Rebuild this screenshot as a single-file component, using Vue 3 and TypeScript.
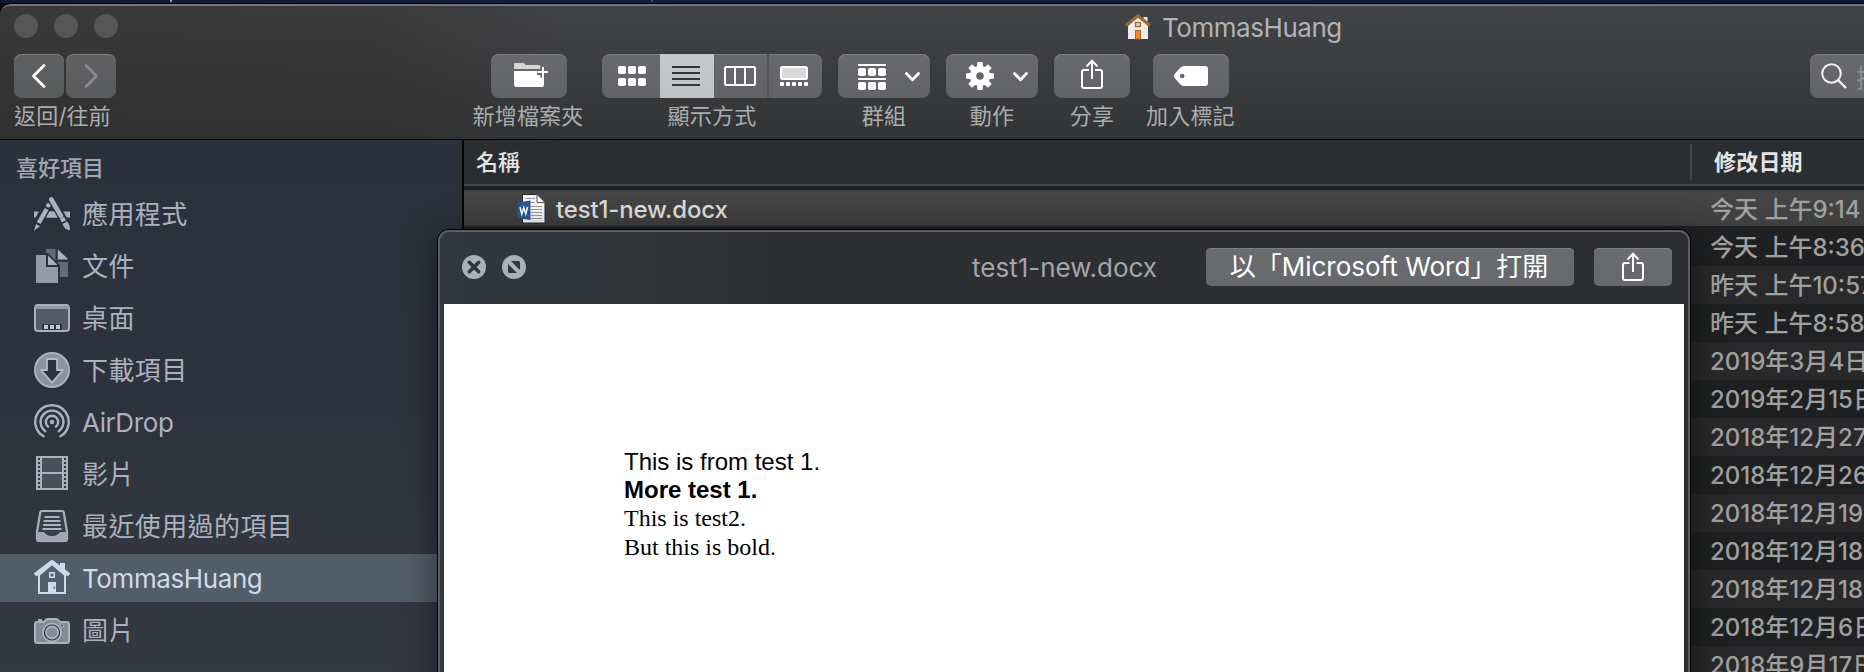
<script setup lang="ts">
interface Place {
  icon: string
  label: string
  active?: boolean
}

const places: Place[] = [
  { icon: 'apps', label: '應用程式' },
  { icon: 'docs', label: '文件' },
  { icon: 'desktop', label: '桌面' },
  { icon: 'downloads', label: '下載項目' },
  { icon: 'airdrop', label: 'AirDrop' },
  { icon: 'movies', label: '影片' },
  { icon: 'recents', label: '最近使用過的項目' },
  { icon: 'home', label: 'TommasHuang', active: true },
  { icon: 'pictures', label: '圖片' },
]

const dates: string[] = [
  '今天 上午8:36',
  '昨天 上午10:57',
  '昨天 上午8:58',
  '2019年3月4日',
  '2019年2月15日',
  '2018年12月27日',
  '2018年12月26日',
  '2018年12月19日',
  '2018年12月18日',
  '2018年12月18日',
  '2018年12月6日',
  '2018年9月17日',
]

const sprockets: number[] = [2, 6, 10, 14, 18, 22, 26, 30]
const teeth: number[] = [0, 45, 90, 135, 180, 225, 270, 315]
</script>

<template>
  <div class="screen">
    <div class="wallpaper"><i class="speck s1"></i><i class="speck s2"></i></div>

    <div class="finder">
      <header class="toolbar">
        <div class="titlebar">
          <div class="lights"><i></i><i></i><i></i></div>
          <div class="title">
            <svg class="title-icon" width="26" height="27" viewBox="0 0 26 27">
              <rect x="18.500" y="3" width="4" height="8" fill="#e9e9e9" />
              <path d="M3 12 L13 3 L23 12 V25 H3Z" fill="#ececec" />
              <path d="M1 11.500 L13 1.800 L25 11.500" fill="none" stroke="#9a6a35" stroke-width="3" />
              <rect x="10.500" y="8.500" width="5" height="4" fill="#b9d4e6" stroke="#a8652a" stroke-width="1.200" />
              <rect x="10.500" y="16.500" width="5" height="8.500" fill="#f08a1d" stroke="#b4621a" stroke-width="1" />
            </svg>
            <span>TommasHuang</span>
          </div>
        </div>

        <div class="tools">
          <div class="tool nav">
            <div class="pair">
              <button class="btn">
                <svg width="50" height="44" viewBox="0 0 50 44"><path d="M30 11.500 L19.500 22 L30 32.500" fill="none" stroke="#fff" stroke-width="2.800" stroke-linecap="round" stroke-linejoin="round" /></svg>
              </button>
              <button class="btn">
                <svg width="50" height="44" viewBox="0 0 50 44"><path d="M20 11.500 L30.500 22 L20 32.500" fill="none" stroke="#8b8b8d" stroke-width="2.600" stroke-linecap="round" stroke-linejoin="round" /></svg>
              </button>
            </div>
            <span class="caption">返回/往前</span>
          </div>

          <div class="tool folder">
            <button class="btn w76">
              <svg width="76" height="44" viewBox="0 0 76 44">
                <path d="M23 10 Q23 9 24 9 H32 Q34 9 34.500 11 H48 Q49.500 11 49.500 12.500 V15 H23Z" fill="#d6d6d9" />
                <path d="M23 17 H46 V21 H53 V31 Q53 33 51 33 H25 Q23 33 23 31Z" fill="#fff" />
                <path d="M46 18.300 H57 M51.700 13 V23.500" stroke="#66676a" stroke-width="5" />
                <path d="M46.500 18 H57 M52 13 V23.500" stroke="#fff" stroke-width="2" />
              </svg>
            </button>
            <span class="caption">新增檔案夾</span>
          </div>

          <div class="tool">
            <div class="btn segments">
              <div class="seg a">
                <svg width="28" height="20" viewBox="0 0 28 20" fill="#fff">
                  <rect v-for="n in 6" :key="n" :x="((n - 1) % 3) * 10" :y="n > 3 ? 12 : 0" width="8" height="8" rx="1.800" />
                </svg>
              </div>
              <div class="seg b">
                <svg width="28" height="20" viewBox="0 0 28 20"><path d="M0 1 H28 M0 7 H28 M0 13 H28 M0 19 H28" stroke="#333437" stroke-width="2" /></svg>
              </div>
              <div class="seg c">
                <svg width="32" height="20" viewBox="0 0 32 20"><rect x="1" y="1" width="30" height="18" rx="1.500" fill="none" stroke="#fff" stroke-width="2" /><path d="M11 1 V19 M21 1 V19" stroke="#fff" stroke-width="2" /></svg>
              </div>
              <div class="seg d">
                <svg width="28" height="20" viewBox="0 0 28 20"><rect x="1" y="1" width="26" height="12" rx="1.500" fill="#d9d9dc" stroke="#fff" stroke-width="2" /><rect v-for="n in 5" :key="n" :x="(n - 1) * 6" y="16" width="4" height="4" rx="1" fill="#fff" /></svg>
              </div>
            </div>
            <span class="caption">顯示方式</span>
          </div>

          <div class="tool">
            <button class="btn w92">
              <svg width="92" height="44" viewBox="0 0 92 44">
                <path d="M20 11 H48 M20 25 H48" stroke="#fff" stroke-width="2" />
                <rect v-for="n in 6" :key="n" :x="20 + ((n - 1) % 3) * 10" :y="n > 3 ? 28 : 14" width="8" height="8" rx="1.800" fill="#fff" />
                <path d="M68.500 19.500 L74.500 25.700 L80.500 19.500" fill="none" stroke="#fff" stroke-width="2.800" stroke-linecap="round" stroke-linejoin="round" />
              </svg>
            </button>
            <span class="caption">群組</span>
          </div>

          <div class="tool">
            <button class="btn w92">
              <svg width="92" height="44" viewBox="0 0 92 44">
                <g fill="#fff"><path v-for="a in teeth" :key="a" d="M31.400 8 H36.600 L37.200 15 H30.800Z" :transform="`rotate(${a} 34 22)`" /></g>
                <circle cx="34" cy="22" r="7" fill="none" stroke="#fff" stroke-width="6.400" />
                <path d="M68.500 19.500 L74.500 25.700 L80.500 19.500" fill="none" stroke="#fff" stroke-width="2.800" stroke-linecap="round" stroke-linejoin="round" />
              </svg>
            </button>
            <span class="caption">動作</span>
          </div>

          <div class="tool">
            <button class="btn w76">
              <svg width="22" height="32" viewBox="0 0 22 32" class="share"><path d="M8 11 H3 Q1 11 1 13 V27 Q1 29 3 29 H19 Q21 29 21 27 V13 Q21 11 19 11 H14 M11 20 V2 M5.500 7.500 L11 1.700 L16.500 7.500" fill="none" stroke="#fff" stroke-width="2" /></svg>
            </button>
            <span class="caption">分享</span>
          </div>

          <div class="tool tag">
            <button class="btn w76">
              <svg width="76" height="44" viewBox="0 0 76 44"><path fill-rule="evenodd" d="M31 12 H52 Q55 12 55 15 V29 Q55 32 52 32 H31 Q29 32 27.500 30.500 L22 24.500 Q20 22 22 19.500 L27.500 13.500 Q29 12 31 12Z M31.500 22 a2.300 2.300 0 1 0 -4.600 0 a2.300 2.300 0 1 0 4.600 0Z" fill="#fff" /></svg>
            </button>
            <span class="caption">加入標記</span>
          </div>

          <div class="search">
            <svg width="26" height="26" viewBox="0 0 26 26"><circle cx="10.500" cy="10.500" r="9.300" fill="none" stroke="#f2f2f2" stroke-width="2" /><path d="M17 17 L25 25" stroke="#f2f2f2" stroke-width="2.400" /></svg>
            <span>搜尋</span>
          </div>
        </div>
      </header>

      <div class="body">
        <nav class="sidebar">
          <h2>喜好項目</h2>
          <div v-for="p in places" :key="p.icon" class="place" :class="{ active: p.active }">
            <svg class="picon" width="36" height="36" viewBox="0 0 36 36">
              <g v-if="p.icon === 'apps'">
                <path d="M0 15.500 H36 V21.500 H0Z" fill="#abb1bf" />
                <path d="M15.500 5.500 L1.500 31" stroke="#2c323d" stroke-width="9" />
                <path d="M17 3 L31 27" stroke="#2c323d" stroke-width="8.500" />
                <path d="M10 21.500 L13.500 15.500 H21.500 L25 21.500Z" fill="#abb1bf" />
                <path d="M15 9 L4.500 27.500" stroke="#2c323d" stroke-width="7" />
                <circle cx="14.300" cy="9.300" r="2.300" fill="#abb1bf" />
                <path d="M12.700 13 L4.700 27" stroke="#abb1bf" stroke-width="4.400" />
                <path d="M2 28 L6 30.200 L0 34.800Z" fill="#abb1bf" />
                <path d="M16.500 2.500 L30.500 26.500" stroke="#2c323d" stroke-width="6.800" />
                <path d="M17.300 3.500 L27 20" stroke="#abb1bf" stroke-width="4.600" stroke-linecap="round" />
                <path d="M28 22 L30 25.400" stroke="#abb1bf" stroke-width="4.600" />
                <path d="M28.500 28 L33 25.500 Q37 29 35.500 34.500 Q30 33 28.500 28Z" fill="#abb1bf" />
              </g>
              <g v-else-if="p.icon === 'docs'">
                <path d="M12 1 H23 L34 12 V29 H12Z" fill="#656b78" />
                <path d="M22.500 1 V13 H34" fill="none" stroke="#2c323d" stroke-width="2" />
                <path d="M24 1.500 L34 11 H24Z" fill="#abb1bf" />
                <path d="M0 5 H14 L26 17 V36 H0Z" fill="#2c323d" />
                <path d="M2 7 H12 V19 H24 V35 H2Z" fill="#949aa8" />
                <path d="M14 7.500 V17 H23.500Z" fill="#abb1bf" />
              </g>
              <g v-else-if="p.icon === 'desktop'">
                <rect x="1" y="5" width="34" height="26" rx="3" fill="#555b67" stroke="#abb1bf" stroke-width="2" />
                <path d="M1 7.500 H35" stroke="#9299a7" stroke-width="3" />
                <rect x="8" y="24" width="20" height="6" fill="#2f3540" />
                <path d="M10 27 H14 M16 27 H20 M22 27 H26" stroke="#c0c6d2" stroke-width="4" />
              </g>
              <g v-else-if="p.icon === 'downloads'">
                <circle cx="18" cy="18" r="17" fill="#8b92a0" stroke="#abb1bf" stroke-width="2" />
                <path d="M13 7 H23 V18 H29 L18 30.500 L7 18 H13Z" fill="#2c323d" stroke="#b4bac7" stroke-width="1.800" stroke-linejoin="round" />
              </g>
              <g v-else-if="p.icon === 'airdrop'" fill="none" stroke="#abb1bf" stroke-width="2.400" stroke-linecap="round">
                <path d="M9.500 32.300 A16.700 16.700 0 1 1 26.500 32.300" />
                <path d="M11.300 27.200 A11.400 11.400 0 1 1 24.700 27.200" />
                <path d="M14 22.700 A6.200 6.200 0 1 1 22 22.700" />
                <circle cx="18" cy="18" r="2.300" fill="#abb1bf" stroke="none" />
              </g>
              <g v-else-if="p.icon === 'movies'">
                <rect x="2" y="0" width="32" height="34" fill="#abb1bf" />
                <rect x="8" y="2" width="20" height="14" fill="#4b515c" />
                <rect x="8" y="18" width="20" height="14" fill="#4b515c" />
                <g fill="#2f3540"><template v-for="y in sprockets" :key="y"><rect x="4" :y="y" width="2" height="2" /><rect x="30" :y="y" width="2" height="2" /></template></g>
              </g>
              <g v-else-if="p.icon === 'recents'">
                <path d="M8 3 H28 Q29.500 3 29.800 4.500 L33 24 V31 Q33 33 31 33 H5 Q3 33 3 31 V24 L6.200 4.500 Q6.500 3 8 3Z" fill="#373d48" stroke="#abb1bf" stroke-width="2.200" />
                <path d="M10.500 9 H25.500 M9.500 13 H26.500 M9 17 H27 M8.500 21 H27.500" stroke="#abb1bf" stroke-width="1.800" />
                <path d="M3 24 H10 Q12.500 28 18 28 Q23.500 28 26 24 H33 V33 H3Z" fill="#a0a6b4" />
              </g>
              <g v-else-if="p.icon === 'home'">
                <rect x="26" y="3" width="5" height="9" fill="#cddaea" />
                <path d="M5 15 L18 4 L31 15 V33 H5Z" fill="#52606e" stroke="#cddaea" stroke-width="2" />
                <path d="M1 15 L18 2 L35 15" fill="none" stroke="#cddaea" stroke-width="4" />
                <rect x="15.800" y="12.800" width="4.400" height="4.400" fill="none" stroke="#cddaea" stroke-width="1.600" />
                <path d="M14 22 H22 V33 H14Z" fill="#cddaea" />
                <path d="M20.200 26.500 V29" stroke="#52606e" stroke-width="1.200" />
              </g>
              <g v-else>
                <path d="M4 7 H8 V9 H4Z" fill="#abb1bf" />
                <path d="M1 12 Q1 10 3 10 H10 L12.500 7.200 Q13 7 14 7 H22 Q23 7 23.500 7.500 L26 10 H33 Q35 10 35 12 V29 Q35 31 33 31 H3 Q1 31 1 29Z" fill="#858b98" stroke="#abb1bf" stroke-width="2" />
                <circle cx="18" cy="20.500" r="9" fill="#2f3540" stroke="#abb1bf" stroke-width="1.800" />
                <circle cx="18" cy="20.500" r="6" fill="#858b98" stroke="#abb1bf" stroke-width="1.800" />
                <circle cx="28" cy="13.500" r="1.500" fill="#2f3540" stroke="#abb1bf" stroke-width="1.200" />
              </g>
            </svg>
            <span class="plabel" :class="{ latin: p.icon === 'home' || p.icon === 'airdrop' }">{{ p.label }}</span>
          </div>
        </nav>

        <section class="list">
          <div class="head">
            <span class="h-name">名稱</span>
            <span class="h-date">修改日期</span>
          </div>
          <div class="row selected">
            <div class="name">
              <svg width="30" height="32" viewBox="0 0 30 32">
                <path d="M5.500 1.500 H20 L28 9.500 V30 H5.500Z" fill="#f6f6f6" stroke="#2b2b2b" stroke-width="1" />
                <path d="M20 1.500 V9.500 H28Z" fill="#fff" stroke="#555" stroke-width="1" />
                <path d="M8 5.500 H18 M13 9.500 H18 M14 13.500 H25 M14 16.500 H25 M14 19.500 H25 M14 22.500 H25 M14 25.500 H25" stroke="#9a9a9a" stroke-width="1" />
                <path d="M0.500 9.500 L13.500 7.500 V27 L0.500 25Z" fill="#2b5797" />
                <path d="M3 14 L4.800 21 L6.800 14.500 L8.800 21 L10.600 14" fill="none" stroke="#fff" stroke-width="1.500" />
              </svg>
              <span>test1-new.docx</span>
            </div>
            <span class="date">今天 上午9:14</span>
          </div>
          <div v-for="(d, i) in dates" :key="i" class="row" :class="{ alt: i % 2 === 1 }">
            <span class="date">{{ d }}</span>
          </div>
        </section>
      </div>
    </div>

    <div class="preview">
      <div class="bar">
        <svg class="controls" width="64" height="24" viewBox="0 0 64 24">
          <circle cx="12" cy="12" r="12" fill="#abb1ba" />
          <path d="M7.300 7.300 L16.700 16.700 M16.700 7.300 L7.300 16.700" stroke="#2f353c" stroke-width="3.600" stroke-linecap="round" />
          <circle cx="52" cy="12" r="12" fill="#abb1ba" />
          <path d="M49 6 H56.500 Q58 6 58 7.500 V15Z M46 9 V16.500 Q46 18 47.500 18 H55Z" fill="#2f353c" />
        </svg>
        <span class="ptitle">test1-new.docx</span>
        <button class="pbtn open">以「<span>Microsoft Word</span>」打開</button>
        <button class="pbtn out">
          <svg width="22" height="30" viewBox="0 0 22 30"><path d="M7.500 11 H3 Q1 11 1 13 V26 Q1 28 3 28 H19 Q21 28 21 26 V13 Q21 11 19 11 H14.500 M11 20 V2 M5.500 7.500 L11 1.700 L16.500 7.500" fill="none" stroke="#fff" stroke-width="2" /></svg>
        </button>
      </div>
      <article class="paper">
        <p class="sans l1">This is from test 1.</p>
        <p class="sans l2">More test 1.</p>
        <p class="l3">This is test2.</p>
        <p class="l4">But this is bold.</p>
      </article>
    </div>
  </div>
</template>

<style>
body {
  margin: 0;
  overflow: hidden;
}
</style>

<style scoped>
* {
  box-sizing: border-box;
}

.screen {
  position: relative;
  width: 1864px;
  height: 672px;
  overflow: hidden;
  background: #000;
  font-family: Inter, 'Noto Sans CJK TC', sans-serif;
}

.screen svg {
  display: block;
  flex: none;
}

.wallpaper {
  height: 3px;
  background: linear-gradient(90deg, #101c36, #0d203f 50%, #0b1a36);
}

.speck {
  position: absolute;
  top: 0;
  width: 2px;
  height: 2px;
  background: #8f9bb0;
}
.s1 { left: 170px; }
.s2 { left: 651px; background: #3d4b68; }

.finder {
  height: 668px;
  margin-top: 1px;
  border-radius: 10px 0 0 0;
  overflow: hidden;
}

.toolbar {
  height: 136px;
  border-top: 2px solid #747577;
  border-bottom: 1px solid #000;
  border-radius: 10px 0 0 0;
  background:
    linear-gradient(90deg, rgba(45, 43, 40, 0.4), rgba(45, 43, 40, 0.35) 380px, transparent 560px),
    linear-gradient(#424346, #333436);
}

.titlebar {
  display: flex;
  height: 48px;
}

.lights {
  display: flex;
  gap: 16px;
  padding: 8px 0 0 14px;
}
.lights i {
  width: 24px;
  height: 24px;
  border-radius: 50%;
  background: #555658;
}

.title {
  display: flex;
  gap: 11px;
  margin-left: 1007px;
  padding-top: 8px;
  color: #b1b2b4;
  font-size: 26px;
  line-height: 27px;
  letter-spacing: -0.45px;
}

.tools {
  display: flex;
  gap: 16px;
  padding-left: 14px;
}

.tool {
  display: flex;
  flex-direction: column;
  align-items: center;
}
.tool.nav {
  width: 102px;
  align-items: flex-start;
}
.tool.folder {
  width: 114px;
  margin-left: 340px;
}
.tool.folder .caption { margin-right: 2px; }
.tool.tag .btn { margin-left: 1px; }

.pair {
  display: flex;
  gap: 2px;
}

.btn,
.pbtn {
  display: flex;
  align-items: center;
  justify-content: center;
  height: 44px;
  padding: 0;
  border: 0;
  border-radius: 8px;
  background: linear-gradient(#68696c, #626366);
  box-shadow: inset 0 1px 0 #7e7f82;
}
.nav .btn {
  width: 50px;
  background: linear-gradient(#606163, #5a5b5d);
}
.w76 { width: 76px; }
.w92 { width: 92px; }
.share { margin-top: -2px; }

.caption {
  margin-top: 6px;
  color: #abacae;
  font-size: 22px;
  line-height: 24px;
  letter-spacing: 0.2px;
  white-space: nowrap;
}

.segments {
  width: 220px;
  overflow: hidden;
}
.seg {
  display: flex;
  align-items: center;
  justify-content: center;
  height: 44px;
}
.seg.a { width: 58px; padding-left: 2px; }
.seg.b { width: 54px; padding-right: 2px; background: linear-gradient(#c8c9cb, #c0c1c3); }
.seg.c { width: 53px; padding-right: 1px; }
.seg.d { width: 55px; padding-right: 3px; border-left: 2px solid #545558; }

.search {
  display: flex;
  align-items: center;
  gap: 9px;
  width: 80px;
  height: 44px;
  margin-left: auto;
  padding-left: 11px;
  border-radius: 8px;
  margin-right: -26px;
  background: linear-gradient(#68696c, #626366);
  box-shadow: inset 0 1px 0 #7e7f82;
  color: #8f9092;
  font-size: 26px;
  white-space: nowrap;
}

.body {
  display: flex;
  height: 532px;
}

.sidebar {
  width: 464px;
  flex: none;
  border-right: 2px solid #000;
  background: linear-gradient(#2b313c, #2d333e 50%, #343842);
}
.sidebar h2 {
  height: 48px;
  margin: 0;
  padding: 13px 0 0 16px;
  color: #a0a6b4;
  font-size: 22px;
  font-weight: 500;
  line-height: 30px;
}

.place {
  display: flex;
  align-items: center;
  gap: 12px;
  height: 48px;
  margin: 2px 0 4px;
  padding-left: 34px;
  color: #abb1bf;
  font-size: 26px;
  line-height: 36px;
}
.place.active {
  background: #525d6a;
  color: #cddaea;
}
.plabel {
  padding-top: 2px;
  letter-spacing: 0.4px;
}
.plabel.latin { letter-spacing: -0.4px; }

.list {
  flex: 1;
  min-width: 0;
  background: #1f2021;
}

.head {
  display: flex;
  height: 46px;
  margin-bottom: 4px;
  padding-left: 12px;
  border-bottom: 2px solid #484a4c;
  background: #2b2e30;
  color: #e4e4e4;
  font-size: 22px;
  font-weight: 500;
  line-height: 44px;
}
.h-name { width: 1214px; }
.h-date {
  height: 36px;
  margin-top: 4px;
  padding-left: 22px;
  border-left: 2px solid #444648;
  line-height: 36px;
  font-weight: 700;
  letter-spacing: 0.2px;
}

.row {
  display: flex;
  height: 38px;
  color: #a0a0a0;
  font-size: 24px;
  font-weight: 500;
  line-height: 39px;
  white-space: nowrap;
}
.row.alt { background: #29292b; }
.row.selected {
  height: 36px;
  margin-bottom: 2px;
  background: linear-gradient(#464646, #3f3f3f);
}
.date {
  margin-left: auto;
  width: 154px;
}
.name {
  display: flex;
  align-items: center;
  gap: 9px;
  padding: 1px 0 0 53px;
  color: #dedede;
  letter-spacing: -0.15px;
}
.name span { padding-top: 1px; }

.preview {
  position: absolute;
  left: 438px;
  top: 230px;
  width: 1252px;
  height: 460px;
  padding: 0 4px;
  border: 2px solid #5b5d60;
  border-radius: 11px;
  background: linear-gradient(90deg, #2f3840, #303336 220px, #2d2e32 340px, #2d2e32);
  box-shadow: 0 0 0 1px #000, 0 6px 34px 2px rgba(0, 0, 0, 0.45);
}

.bar {
  display: flex;
  align-items: center;
  height: 72px;
  padding-bottom: 2px;
}
.controls { margin-left: 18px; }
.ptitle {
  width: 184px;
  margin-left: 446px;
  color: #a4a5a8;
  font-size: 26px;
  white-space: nowrap;
}
.pbtn {
  height: 38px;
  border-radius: 5px;
  color: #fff;
  background: linear-gradient(#6b6c6f, #67686b);
}
.open {
  width: 368px;
  margin: 0 20px 0 50px;
  padding-right: 2px;
  font-family: inherit;
  font-size: 26px;
  line-height: 36px;
}
.out { width: 78px; }

.paper {
  height: 380px;
  padding: 144px 0 0 180px;
  background: #fff;
  color: #000;
}
.paper p {
  height: 28.200px;
  margin: 0;
  font-family: 'Liberation Serif', serif;
  font-size: 24px;
  line-height: 28.200px;
}
.paper .sans { font-family: 'Liberation Sans', sans-serif; }
.paper .l2 { font-weight: 700; }
</style>
